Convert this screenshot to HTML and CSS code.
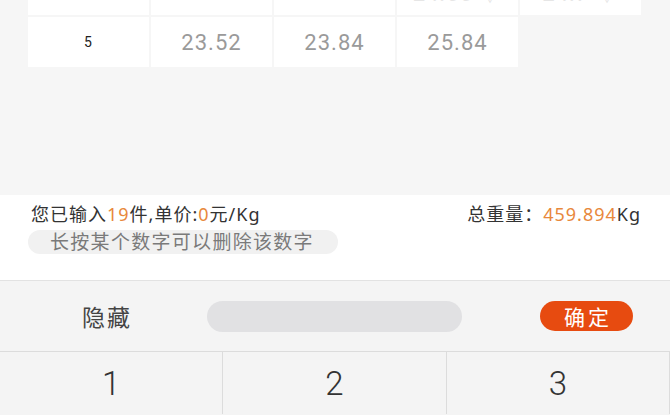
FILE: index.html
```html
<!DOCTYPE html>
<html lang="zh-CN">
<head>
    <meta charset="UTF-8">
    <meta name="viewport" content="width=device-width, initial-scale=1.0">
    <title>称重录入</title>
    <link rel="stylesheet" href="styles.css">
</head>
<body>
    <div class="page">
        <div class="record-area">
            <div class="grid">
                <div class="cell head">4</div>
                <div class="cell head">23.46</div>
                <div class="cell head">24.08</div>
                <div class="cell head">24.66 ▽</div>
                <div class="cell head">24.7 ▽</div>

                <div class="cell index">5</div>
                <div class="cell">23.52</div>
                <div class="cell">23.84</div>
                <div class="cell">25.84</div>
            </div>
        </div>

        <div class="summary">
            <div class="summary-line">
                <span>您已输入<em>19</em>件,单价:<em>0</em>元/Kg</span>
                <span>总重量：<em>459.894</em>Kg</span>
            </div>
            <div class="tip">长按某个数字可以删除该数字</div>
        </div>

        <div class="keyboard">
            <div class="toolbar">
                <span class="hide-btn">隐藏</span>
                <div class="input-pill"></div>
                <button class="ok-btn">确定</button>
            </div>
            <div class="keys">
                <div class="key">1</div>
                <div class="key">2</div>
                <div class="key">3</div>
            </div>
        </div>
    </div>
</body>
</html>
```

FILE: styles.css
```css
body {
    margin: 0;
    font-family: "Noto Sans", "Noto Sans CJK SC", sans-serif;
    background-color: #f6f6f6;
}

.page {
    width: 670px;
    height: 415px;
    overflow: hidden;
    display: flex;
    flex-direction: column;
}

.record-area {
    height: 195px;
    flex-shrink: 0;
    background-color: #f6f6f6;
    overflow: hidden;
}

.grid {
    display: grid;
    grid-template-columns: repeat(5, 121px);
    grid-auto-rows: 50px;
    gap: 2px;
    padding-left: 28px;
    margin-top: -35px;
}

.cell {
    background-color: #fff;
    display: flex;
    align-items: center;
    justify-content: center;
    font-family: Roboto, sans-serif;
    font-size: 22px;
    letter-spacing: 1px;
    color: #9a9a9a;
}

.cell.head {
    color: #e6e6e6;
    padding-top: 2px;
}

.cell.index {
    font-size: 14px;
    color: #222;
}

.summary {
    height: 86px;
    flex-shrink: 0;
    box-sizing: border-box;
    background-color: #fff;
    border-bottom: 1px solid #e2e2e2;
    padding: 7px 29px 0 31px;
}

.summary-line {
    display: flex;
    justify-content: space-between;
    font-size: 18px;
    letter-spacing: 1px;
    color: #333;
    line-height: 24px;
}

.summary-line em {
    font-style: normal;
    color: #e8883c;
}

.tip {
    display: inline-block;
    margin-top: 4px;
    margin-left: -3px;
    padding: 0 24px 0 22px;
    height: 24px;
    line-height: 24px;
    border-radius: 12px;
    background-color: #f1f1f1;
    color: #7a7a7a;
    font-size: 19px;
    letter-spacing: 1.3px;
}

.keyboard {
    flex: 1;
    background-color: #f4f4f4;
}

.toolbar {
    height: 70px;
    display: flex;
    align-items: center;
    border-bottom: 1px solid #dcdcdc;
}

.hide-btn {
    width: 82px;
    margin-left: 82px;
    font-size: 23px;
    letter-spacing: 2px;
    color: #444;
}

.input-pill {
    width: 255px;
    height: 31px;
    margin-left: 43px;
    border-radius: 16px;
    background-color: #e1e1e3;
}

.ok-btn {
    margin-left: 78px;
    width: 93px;
    height: 30px;
    border: none;
    border-radius: 15px;
    background-color: #e74b10;
    color: #fff;
    font-family: "Noto Sans CJK SC", sans-serif;
    font-size: 21px;
    letter-spacing: 3px;
    text-indent: 3px;
    line-height: 30px;
    padding: 0;
}

.keys {
    display: flex;
}

.key {
    flex: 1;
    height: 62px;
    display: flex;
    align-items: center;
    justify-content: center;
    border-right: 1px solid #dcdcdc;
    font-family: Roboto, sans-serif;
    font-weight: 300;
    font-size: 33px;
    color: #333;
}
```
